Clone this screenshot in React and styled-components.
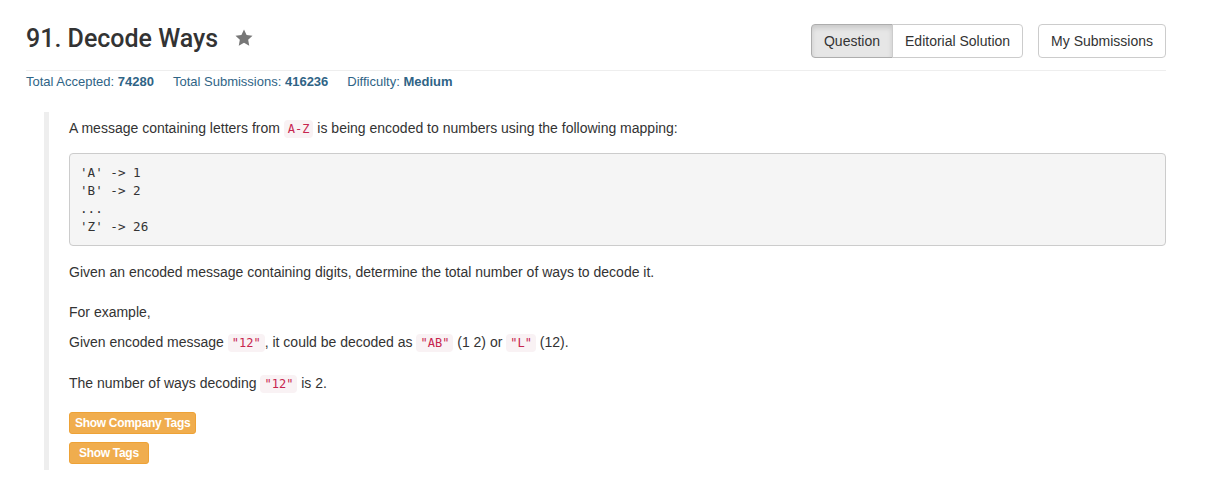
import styled, { createGlobalStyle } from "styled-components";

const GlobalStyle = createGlobalStyle`
  body {
    margin: 0;
    background: #fff;
    font-family: "Liberation Sans", Arial, sans-serif;
    font-size: 14px;
    color: #333;
  }
`;

const App = () => {
  return (
    <Page>
      <GlobalStyle />
      <Header>
        <Title>
          91. Decode Ways
          <Star viewBox="0 0 24 24">
            <path d="M12 1.8l3.1 6.6 7.1.9-5.2 4.9 1.3 7.1L12 17.8l-6.3 3.5 1.3-7.1L1.8 9.3l7.1-.9z" />
          </Star>
        </Title>
        <Actions>
          <Group>
            <NavBtn active>Question</NavBtn>
            <NavBtn>Editorial Solution</NavBtn>
          </Group>
          <NavBtn single>My Submissions</NavBtn>
        </Actions>
      </Header>
      <Stats>
        <span>
          Total Accepted: <b>74280</b>
        </span>
        <span>
          Total Submissions: <b>416236</b>
        </span>
        <span>
          Difficulty: <b>Medium</b>
        </span>
      </Stats>
      <Quote>
        <P>
          A message containing letters from <Code>A-Z</Code> is being encoded to numbers using the
          following mapping:
        </P>
        <Pre>{`'A' -> 1
'B' -> 2
...
'Z' -> 26`}</Pre>
        <P gap={20}>
          Given an encoded message containing digits, determine the total number of ways to decode it.
        </P>
        <P>For example,</P>
        <P gap={20}>
          Given encoded message <Code>"12"</Code>, it could be decoded as <Code>"AB"</Code> (1 2) or{" "}
          <Code>"L"</Code> (12).
        </P>
        <P>
          The number of ways decoding <Code>"12"</Code> is 2.
        </P>
        <TagBtn>Show Company Tags</TagBtn>
        <TagBtn wide>Show Tags</TagBtn>
      </Quote>
    </Page>
  );
};

export default App;

const Page = styled.div`
  width: 1140px;
  padding: 0 0 0 26px;
`;

const Header = styled.div`
  display: flex;
  justify-content: space-between;
  align-items: flex-start;
  padding-top: 24px;
  padding-bottom: 12px;
  border-bottom: 1px solid #eee;
`;

const Title = styled.h3`
  margin: 0;
  font-family: Roboto, "Liberation Sans", Arial, sans-serif;
  font-size: 25px;
  font-weight: 500;
  line-height: 30px;
  color: #333;
  display: flex;
  align-items: center;
`;

const Star = styled.svg`
  width: 20px;
  height: 20px;
  fill: #777;
  margin-left: 16px;
  margin-top: -2px;
`;

const Actions = styled.div`
  display: flex;
  gap: 15px;
`;

const Group = styled.div`
  display: flex;

  & > button:first-child {
    border-radius: 4px 0 0 4px;
  }
  & > button:last-child {
    border-radius: 0 4px 4px 0;
    margin-left: -1px;
  }
`;

const NavBtn = styled.button`
  font-family: "Liberation Sans", Arial, sans-serif;
  font-size: 14px;
  color: #333;
  height: 34px;
  padding: 6px 12px;
  border: 1px solid #ccc;
  border-radius: ${(p) => (p.single ? "4px" : "0")};
  background: ${(p) => (p.active ? "#e6e6e6" : "#fff")};
  border-color: ${(p) => (p.active ? "#adadad" : "#ccc")};
  box-shadow: ${(p) => (p.active ? "inset 0 3px 5px rgba(0,0,0,.125)" : "none")};
  cursor: pointer;
`;

const Stats = styled.div`
  display: flex;
  gap: 19px;
  padding-top: 2px;
  font-size: 13px;
  line-height: 18px;
  color: #2f6486;

  b {
    font-weight: bold;
  }
`;

const Quote = styled.div`
  margin: 21px 0 0 18px;
  padding: 6px 0 6px 20px;
  border-left: 5px solid #eee;
  display: flex;
  flex-direction: column;
  align-items: flex-start;
`;

const P = styled.p`
  margin: 0 0 ${(p) => p.gap || 10}px;
  line-height: 20px;
  font-size: 14px;
  color: #333;
`;

const Code = styled.code`
  font-family: "DejaVu Sans Mono", Menlo, monospace;
  font-size: 12px;
  color: #c7254e;
  background: #f9f2f4;
  padding: 2px 4px;
  border-radius: 4px;
`;

const Pre = styled.pre`
  align-self: stretch;
  margin: 4px 0 16px;
  padding: 9.5px 10px;
  font-family: "DejaVu Sans Mono", Menlo, monospace;
  font-size: 12.6px;
  line-height: 18px;
  color: #333;
  background: #f5f5f5;
  border: 1px solid #ccc;
  border-radius: 4px;
`;

const TagBtn = styled.button`
  font-family: "Liberation Sans", Arial, sans-serif;
  font-size: 12px;
  font-weight: bold;
  letter-spacing: -0.3px;
  color: #fff;
  background: #f0ad4e;
  border: 1px solid #eea236;
  border-radius: 3px;
  height: 22px;
  padding: ${(p) => (p.wide ? "1px 9px" : "1px 5px")};
  margin: 8px 0 0;
  cursor: pointer;
`;
